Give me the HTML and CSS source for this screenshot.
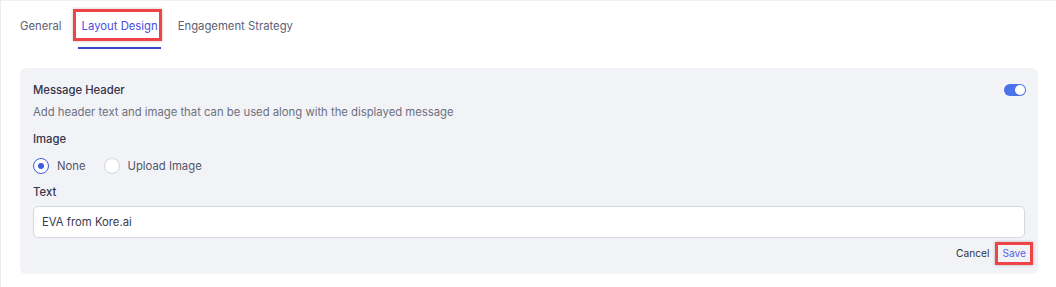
FILE: index.html
```html
<!DOCTYPE html>
<html lang="en">
<head>
    <meta charset="UTF-8">
    <meta name="viewport" content="width=device-width, initial-scale=1.0">
    <title>Layout Design</title>
    <link rel="stylesheet" href="styles.css">
</head>
<body>

<div class="page">
    <div class="tabs">
        <div class="tab"><span class="tab-label">General</span></div>
        <div class="tab active"><span class="tab-label marked">Layout Design</span></div>
        <div class="tab"><span class="tab-label">Engagement Strategy</span></div>
    </div>

    <div class="card">
        <div class="card-head">
            <div class="title">Message Header</div>
            <div class="toggle on"><span class="knob"></span></div>
        </div>
        <div class="hint">Add header text and image that can be used along with the displayed message</div>

        <div class="label">Image</div>
        <div class="radios">
            <label class="radio checked"><span class="dot"></span>None</label>
            <label class="radio"><span class="dot"></span>Upload Image</label>
        </div>

        <div class="label label-text">Text</div>
        <input class="text-input" type="text" value="EVA from Kore.ai">

        <div class="actions">
            <button class="link cancel">Cancel</button>
            <button class="link save marked">Save</button>
        </div>
    </div>
</div>

</body>
</html>
```

FILE: styles.css
```css
body {
    margin: 0;
    background-color: #fff;
    font-family: Inter, "Noto Sans", sans-serif;
    font-size: 11.3px;
    color: #3a3a4c;
}

.page {
    height: 286px;
    border-top: 1px solid #f1f1f4;
    border-left: 1px solid #ebecf0;
    padding: 0 18px 0 19px;
}

.tabs {
    display: flex;
    gap: 7px;
    padding-top: 8px;
    margin-left: -9px;
}

.tab {
    position: relative;
    padding-bottom: 8px;
}

.tab-label {
    display: block;
    line-height: 16px;
    padding: 6px 1px 4px 6px;
    border: 3px solid transparent;
    color: #5d6072;
}

.tab.active .tab-label {
    color: #4a4ddf;
}

.tab.active::after {
    content: "";
    position: absolute;
    left: 5px;
    right: 1px;
    bottom: 0;
    height: 2px;
    background-color: #3b46cc;
}

.marked {
    border: 3px solid #ef4347 !important;
    box-shadow: 0 0 3px rgba(0, 0, 0, 0.25);
}

.card {
    margin-top: 19px;
    background-color: #f2f3f7;
    border-radius: 6px;
    padding: 14px 13px 9px 13px;
}

.card-head {
    display: flex;
    justify-content: space-between;
    align-items: center;
    line-height: 16px;
}

.title {
    color: #34344a;
    font-weight: 500;
}

.toggle {
    width: 22px;
    height: 12px;
    border-radius: 6px;
    background-color: #4b72e8;
    display: flex;
    align-items: center;
    justify-content: flex-end;
    padding: 0 1px;
    box-sizing: border-box;
    margin-right: -1px;
}

.knob {
    width: 10px;
    height: 10px;
    border-radius: 50%;
    background-color: #fff;
}

.hint {
    margin-top: 6px;
    line-height: 16px;
    color: #6c7080;
}

.label {
    margin-top: 11px;
    line-height: 16px;
    color: #34344a;
    font-weight: 500;
}

.label-text {
    margin-top: 10px;
}

.radios {
    display: flex;
    gap: 18px;
    margin-top: 11px;
}

.radio {
    display: flex;
    align-items: center;
    gap: 8px;
    line-height: 16px;
    color: #54566a;
}

.dot {
    width: 16px;
    height: 16px;
    border-radius: 50%;
    box-sizing: border-box;
    border: 1px solid #d3d6de;
    background-color: #fff;
    display: flex;
    align-items: center;
    justify-content: center;
}

.radio.checked .dot {
    border: 1.5px solid #3d5ce0;
}

.radio.checked .dot::after {
    content: "";
    width: 6px;
    height: 6px;
    border-radius: 50%;
    background-color: #3d5ce0;
}

.text-input {
    display: block;
    width: 100%;
    box-sizing: border-box;
    height: 32px;
    margin-top: 6px;
    padding: 0 8px;
    border: 1px solid #d5d9e0;
    border-radius: 5px;
    background-color: #fff;
    font-family: Inter, "Noto Sans", sans-serif;
    font-size: 11.3px;
    color: #3a3a4c;
}

.actions {
    display: flex;
    justify-content: flex-end;
    align-items: center;
    gap: 3px;
    margin-top: 4px;
    margin-right: -8px;
}

.link {
    background: none;
    border: none;
    padding: 1px 3px;
    font-family: Inter, "Noto Sans", sans-serif;
    font-size: 10.2px;
    line-height: 15px;
    cursor: pointer;
}

.cancel {
    color: #2e3142;
}

.save {
    padding: 1px 4px;
    color: #5a5ee6;
}
```
